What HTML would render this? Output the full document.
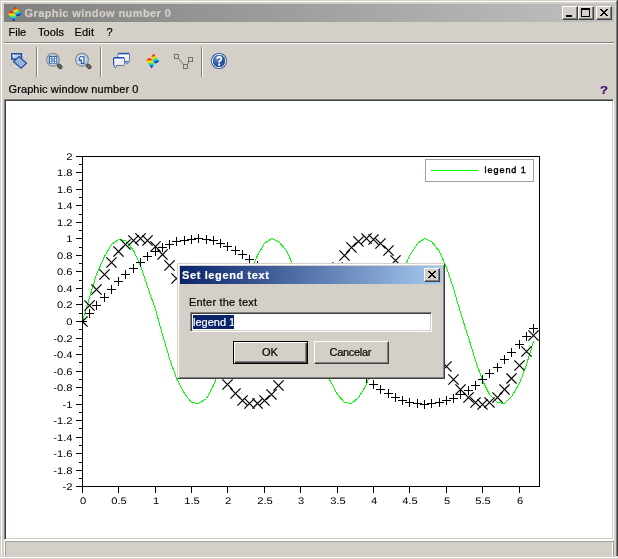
<!DOCTYPE html>
<html><head><meta charset="utf-8"><title>Graphic window number 0</title><style>
*{margin:0;padding:0;box-sizing:border-box}
body{will-change:transform}
html,body{width:618px;height:559px;overflow:hidden;background:#d4d0c8;font-family:"Liberation Sans",sans-serif;font-size:11px;color:#000}
.a{position:absolute}
.t{white-space:nowrap;line-height:1;-webkit-text-stroke:0.2px currentColor}
.cb{position:absolute;width:16px;height:14px;background:#d4d0c8;border-left:1px solid #fff;border-top:1px solid #fff;border-right:1px solid #404040;border-bottom:1px solid #404040;box-shadow:inset -1px -1px 0 #808080}
.btn{position:absolute;background:#d4d0c8;border-left:1px solid #fff;border-top:1px solid #fff;border-right:1px solid #404040;border-bottom:1px solid #404040;box-shadow:inset -1px -1px 0 #808080}
.sep{position:absolute;width:2px;height:30px;top:47px;border-left:1px solid #808080;border-right:1px solid #fff}
</style></head><body>
<!-- window frame -->
<div class="a" style="left:1px;top:1px;width:616px;height:1px;background:#fff"></div>
<div class="a" style="left:1px;top:1px;width:1px;height:555px;background:#fff"></div>
<div class="a" style="left:617px;top:0;width:1px;height:556px;background:#404040"></div>
<div class="a" style="left:616px;top:1px;width:1px;height:555px;background:#808080"></div>
<!-- title bar -->
<div class="a" style="left:4px;top:4px;width:610px;height:18px;background:linear-gradient(to right,#808080,#c0c0c0)"></div>
<svg class="a" style="left:6px;top:5.5px" width="16" height="16" viewBox="0 0 16 16">
<defs><linearGradient id="ti1" gradientUnits="userSpaceOnUse" x1="0" y1="5" x2="0" y2="15"><stop offset="0" stop-color="#b00000"/><stop offset="0.15" stop-color="#ff3000"/><stop offset="0.35" stop-color="#f8e800"/><stop offset="0.55" stop-color="#50e070"/><stop offset="0.72" stop-color="#00b0f0"/><stop offset="0.88" stop-color="#0030e0"/><stop offset="1" stop-color="#000090"/></linearGradient>
<linearGradient id="ti2" gradientUnits="userSpaceOnUse" x1="9" y1="1.2" x2="12" y2="10.5"><stop offset="0" stop-color="#b00000"/><stop offset="0.15" stop-color="#ff3000"/><stop offset="0.35" stop-color="#f8e800"/><stop offset="0.55" stop-color="#50e070"/><stop offset="0.72" stop-color="#00b0f0"/><stop offset="0.88" stop-color="#0030e0"/><stop offset="1" stop-color="#000090"/></linearGradient></defs>
<path d="M2 7.6 C3.2 5.6 5 4.6 6.6 5.6 C7.6 6.3 9.5 9 10.8 10.6 L8.3 14.6 Q7.8 15.3 7.2 14.8 Z" fill="url(#ti1)"/>
<path d="M7 5.4 C7.8 3.4 8.6 1.2 9.9 1.3 C11 1.5 13.5 6 15.1 8.4 L12 10.3 Q11.3 10.5 10.8 10 Z" fill="url(#ti2)"/>
</svg>
<div class="a t" style="left:24.5px;top:8px;font-weight:bold;font-size:11px;color:#d4d0c8;letter-spacing:0.4px">Graphic window number 0</div>
<div class="cb" style="left:562px;top:6px"><div class="a" style="left:3px;top:8px;width:6px;height:2px;background:#000"></div></div>
<div class="cb" style="left:578px;top:6px"><div class="a" style="left:2px;top:1px;width:9px;height:9px;border:1px solid #000;border-top-width:2px"></div></div>
<div class="cb" style="left:596px;top:6px"><svg class="a" style="left:3px;top:2px" width="8" height="7" shape-rendering="crispEdges"><path d="M0 0h2v1h-2zM6 0h2v1h-2zM1 1h2v1h-2zM5 1h2v1h-2zM2 2h4v1h-4zM3 3h2v1h-2zM2 4h4v1h-4zM1 5h2v1h-2zM5 5h2v1h-2zM0 6h2v1h-2zM6 6h2v1h-2z" fill="#000"/></svg></div>
<!-- menu -->
<div class="a t" style="left:8.5px;top:27px">File</div>
<div class="a t" style="left:38px;top:27px;letter-spacing:0.1px">Tools</div>
<div class="a t" style="left:74.5px;top:27px;letter-spacing:0.2px">Edit</div>
<div class="a t" style="left:106.5px;top:27px">?</div>
<div class="a" style="left:4px;top:42px;width:610px;height:1px;background:#808080"></div>
<div class="a" style="left:4px;top:43px;width:610px;height:1px;background:#fff"></div>
<!-- toolbar -->
<div class="sep" style="left:36px"></div>
<div class="sep" style="left:100px"></div>
<div class="sep" style="left:201px"></div>
<svg class="a" style="left:0;top:44px" width="240" height="34" viewBox="0 44 240 34">
<defs>
<linearGradient id="lb" x1="0" y1="0" x2="1" y2="1"><stop offset="0" stop-color="#e8f0fa"/><stop offset="1" stop-color="#8fb0e0"/></linearGradient>
<radialGradient id="lens" cx="0.4" cy="0.4" r="0.6"><stop offset="0" stop-color="#eef5fd"/><stop offset="1" stop-color="#a9c8ee"/></radialGradient>
<radialGradient id="hb" cx="0.35" cy="0.3" r="0.75"><stop offset="0" stop-color="#6a96d0"/><stop offset="0.6" stop-color="#2c5aa0"/><stop offset="1" stop-color="#1e4a90"/></radialGradient>
<linearGradient id="jet" x1="0" y1="0" x2="0" y2="1"><stop offset="0" stop-color="#c00000"/><stop offset="0.2" stop-color="#ff5000"/><stop offset="0.4" stop-color="#e8f000"/><stop offset="0.6" stop-color="#40e090"/><stop offset="0.8" stop-color="#0090ff"/><stop offset="1" stop-color="#0000a0"/></linearGradient>
</defs>
<!-- rotate -->
<path d="M22.5 55 Q25.3 55 25.5 57.5" fill="none" stroke="#a8aeb6" stroke-width="2.6"/>
<path d="M23.5 58 L25.5 60.2 L27.6 58 Z" fill="#fff" stroke="#a8aeb6" stroke-width="0.9"/>
<path d="M22.5 55 Q25.3 55 25.5 57.5" fill="none" stroke="#fff" stroke-width="1.2"/>
<path d="M17.5 67.2 Q13 67.2 12.8 65" fill="none" stroke="#a8aeb6" stroke-width="2.6"/>
<path d="M10.7 65 L12.8 62.8 L14.9 65 Z" fill="#fff" stroke="#a8aeb6" stroke-width="0.9"/>
<path d="M17.5 67.2 Q13 67.2 12.8 65" fill="none" stroke="#fff" stroke-width="1.2"/>
<rect x="11.8" y="53.8" width="9.6" height="5.4" fill="url(#lb)" stroke="#1e4c9c" stroke-width="1.5"/>
<rect x="12.6" y="54.6" width="1.2" height="1.2" fill="#fff"/>
<path d="M13.6 61.5 L19 56.6 L26.4 63.3 L21.1 68.2 Z" fill="#a8c0e8" stroke="#1e4c9c" stroke-width="1.3"/>
<path d="M15.2 61.5 L19 58.2 L24.7 63.3 L21.2 66.5 Z" fill="#98b2de"/>
<!-- zoom 1 -->
<circle cx="53" cy="59.8" r="6.4" fill="url(#lens)" stroke="#8c8c8c" stroke-width="1.2"/>
<ellipse cx="59.7" cy="66.4" rx="2.7" ry="1.9" transform="rotate(45 59.7 66.4)" fill="#6a6a6a" stroke="#383838" stroke-width="0.9"/>
<rect x="48.8" y="55.8" width="8.5" height="7.9" fill="#3465ad"/>
<g fill="#fff"><rect x="50" y="57" width="1.5" height="1.5"/><rect x="52.3" y="57" width="1.7" height="1.5"/><rect x="54.8" y="57" width="1.5" height="1.5"/>
<rect x="50" y="59.2" width="1.5" height="1.7"/><rect x="54.8" y="59.2" width="1.5" height="1.7"/><rect x="52.3" y="59.2" width="1.7" height="1.7" fill="#9fc0ea"/>
<rect x="50" y="61.6" width="1.5" height="1.5"/><rect x="52.3" y="61.6" width="1.7" height="1.5"/><rect x="54.8" y="61.6" width="1.5" height="1.5"/></g>
<!-- zoom 2 -->
<circle cx="82" cy="59.8" r="6.4" fill="url(#lens)" stroke="#8c8c8c" stroke-width="1.2"/>
<ellipse cx="88.7" cy="66.4" rx="2.7" ry="1.9" transform="rotate(45 88.7 66.4)" fill="#6a6a6a" stroke="#383838" stroke-width="0.9"/>
<path d="M80.6 56.7 L83.9 56.7 L83.9 63.5 L81.4 63.5 L81.4 59.9 L79.2 60.4 L79.2 58.2 Z" fill="#fff" stroke="#2050a0" stroke-width="1.1" stroke-linejoin="round"/>
<!-- bubbles -->
<linearGradient id="bub" x1="0" y1="0" x2="0" y2="1"><stop offset="0" stop-color="#ffffff"/><stop offset="1" stop-color="#e4e6ec"/></linearGradient>
<rect x="117.8" y="53.4" width="11.7" height="8.3" rx="1" fill="url(#bub)" stroke="#5a78b4" stroke-width="1"/>
<path d="M118.2 53.6 H129.2" stroke="#2050a8" stroke-width="1.5"/>
<path d="M124.8 61.6 L128.3 61.6 L127.6 64 Z" fill="#fff" stroke="#3a60a8" stroke-width="0.9"/>
<rect x="113.5" y="57.6" width="11" height="7.9" rx="1" fill="url(#bub)" stroke="#5a78b4" stroke-width="1"/>
<path d="M113.9 57.8 H124.1" stroke="#2050a8" stroke-width="1.5"/>
<path d="M113.6 57.9 V64.8" stroke="#2050a8" stroke-width="1.2"/>
<path d="M114.2 65.4 L117.6 65.4 L115.2 68 Z" fill="#fff" stroke="#3a60a8" stroke-width="0.9"/>
<path d="M114.5 64.9 H117.3" stroke="#fff" stroke-width="1"/>
<!-- scilab -->
</svg>
<svg class="a" style="left:144px;top:53px" width="16" height="16" viewBox="0 0 16 16">
<defs><linearGradient id="tb1" gradientUnits="userSpaceOnUse" x1="0" y1="5" x2="0" y2="15"><stop offset="0" stop-color="#b00000"/><stop offset="0.15" stop-color="#ff3000"/><stop offset="0.35" stop-color="#f8e800"/><stop offset="0.55" stop-color="#50e070"/><stop offset="0.72" stop-color="#00b0f0"/><stop offset="0.88" stop-color="#0030e0"/><stop offset="1" stop-color="#000090"/></linearGradient>
<linearGradient id="tb2" gradientUnits="userSpaceOnUse" x1="9" y1="1.2" x2="12" y2="10.5"><stop offset="0" stop-color="#b00000"/><stop offset="0.15" stop-color="#ff3000"/><stop offset="0.35" stop-color="#f8e800"/><stop offset="0.55" stop-color="#50e070"/><stop offset="0.72" stop-color="#00b0f0"/><stop offset="0.88" stop-color="#0030e0"/><stop offset="1" stop-color="#000090"/></linearGradient></defs>
<path d="M2 7.6 C3.2 5.6 5 4.6 6.6 5.6 C7.6 6.3 9.5 9 10.8 10.6 L8.3 14.6 Q7.8 15.3 7.2 14.8 Z" fill="url(#tb1)"/>
<path d="M7 5.4 C7.8 3.4 8.6 1.2 9.9 1.3 C11 1.5 13.5 6 15.1 8.4 L12 10.3 Q11.3 10.5 10.8 10 Z" fill="url(#tb2)"/>
</svg>
<svg class="a" style="left:0;top:44px" width="240" height="34" viewBox="0 44 240 34">
<!-- datatip -->
<g fill="none" stroke="#707070" stroke-width="1">
<rect x="174.5" y="54.5" width="4" height="4"/><rect x="183.5" y="64.5" width="4" height="4"/><rect x="188.5" y="57.5" width="4" height="4"/>
<path d="M178.5 58.5 L183.5 64.5 M187.5 64.5 L189 61.5"/>
</g>
<!-- help -->
<circle cx="219" cy="61" r="8" fill="#2a56a0"/>
<circle cx="219" cy="61" r="6.6" fill="none" stroke="#fff" stroke-width="1"/>
<circle cx="219" cy="61" r="6" fill="url(#hb)"/>
<path d="M217.1 58.9 Q217.2 56.8 219.3 56.8 Q221.4 56.9 221.4 58.7 Q221.4 59.9 220 60.7 Q219.2 61.2 219.2 62.5" fill="none" stroke="#fff" stroke-width="1.8"/>
<rect x="218.1" y="63.5" width="2.1" height="2.1" fill="#fff"/>
</svg>
<!-- status label -->
<div class="a t" style="left:8.5px;top:84px;letter-spacing:0.1px">Graphic window number 0</div>
<div class="a t" style="left:600.3px;top:85.5px;font-weight:bold;color:#400080;font-size:10px;transform:scaleX(1.3);transform-origin:left">?</div>
<!-- canvas -->
<div class="a" style="left:4px;top:99px;width:610px;height:441px;background:#fff;border-left:1px solid #808080;border-top:1px solid #808080;border-right:1px solid #fff;border-bottom:1px solid #fff;box-shadow:inset 1px 1px 0 #404040,inset -1px -1px 0 #d4d0c8"></div>
<svg class="a" style="left:0;top:0" width="618" height="559" viewBox="0 0 618 559" shape-rendering="crispEdges">
<defs>
<path id="mp" d="M-4 0h9v1h-9zM0 -4h1v9h-1z" fill="#000"/>
<path id="mx" d="M-4.6 -4.6L5.6 5.6M-4.6 5.6L5.6 -4.6" stroke="#000" stroke-width="1.25" shape-rendering="auto"/>
<clipPath id="ax"><rect x="82" y="156" width="458" height="331"/></clipPath>
</defs>
<g fill="#000">
<rect x="82" y="156" width="458" height="1"/>
<rect x="82" y="486" width="458" height="1"/>
<rect x="82" y="156" width="1" height="331"/>
<rect x="539" y="156" width="1" height="331"/>
<rect x="76" y="156" width="6" height="1"/>
<rect x="79" y="164" width="3" height="1"/>
<rect x="76" y="172" width="6" height="1"/>
<rect x="79" y="180" width="3" height="1"/>
<rect x="76" y="189" width="6" height="1"/>
<rect x="79" y="197" width="3" height="1"/>
<rect x="76" y="205" width="6" height="1"/>
<rect x="79" y="214" width="3" height="1"/>
<rect x="76" y="222" width="6" height="1"/>
<rect x="79" y="230" width="3" height="1"/>
<rect x="76" y="238" width="6" height="1"/>
<rect x="79" y="247" width="3" height="1"/>
<rect x="76" y="255" width="6" height="1"/>
<rect x="79" y="263" width="3" height="1"/>
<rect x="76" y="271" width="6" height="1"/>
<rect x="79" y="280" width="3" height="1"/>
<rect x="76" y="288" width="6" height="1"/>
<rect x="79" y="296" width="3" height="1"/>
<rect x="76" y="304" width="6" height="1"/>
<rect x="79" y="313" width="3" height="1"/>
<rect x="76" y="321" width="6" height="1"/>
<rect x="79" y="329" width="3" height="1"/>
<rect x="76" y="338" width="6" height="1"/>
<rect x="79" y="346" width="3" height="1"/>
<rect x="76" y="354" width="6" height="1"/>
<rect x="79" y="362" width="3" height="1"/>
<rect x="76" y="371" width="6" height="1"/>
<rect x="79" y="379" width="3" height="1"/>
<rect x="76" y="387" width="6" height="1"/>
<rect x="79" y="395" width="3" height="1"/>
<rect x="76" y="404" width="6" height="1"/>
<rect x="79" y="412" width="3" height="1"/>
<rect x="76" y="420" width="6" height="1"/>
<rect x="79" y="428" width="3" height="1"/>
<rect x="76" y="437" width="6" height="1"/>
<rect x="79" y="445" width="3" height="1"/>
<rect x="76" y="453" width="6" height="1"/>
<rect x="79" y="462" width="3" height="1"/>
<rect x="76" y="470" width="6" height="1"/>
<rect x="79" y="478" width="3" height="1"/>
<rect x="76" y="486" width="6" height="1"/>
<rect x="82" y="487" width="1" height="6"/>
<rect x="118" y="487" width="1" height="6"/>
<rect x="155" y="487" width="1" height="6"/>
<rect x="191" y="487" width="1" height="6"/>
<rect x="227" y="487" width="1" height="6"/>
<rect x="264" y="487" width="1" height="6"/>
<rect x="300" y="487" width="1" height="6"/>
<rect x="337" y="487" width="1" height="6"/>
<rect x="373" y="487" width="1" height="6"/>
<rect x="409" y="487" width="1" height="6"/>
<rect x="446" y="487" width="1" height="6"/>
<rect x="482" y="487" width="1" height="6"/>
<rect x="519" y="487" width="1" height="6"/>
</g>
<g font-family='"Liberation Sans", sans-serif' font-size="10" fill="#000" shape-rendering="auto" text-rendering="geometricPrecision">
<text transform="translate(72.50 160) scale(1.12 0.95)" text-anchor="end">2</text>
<text transform="translate(72.50 176) scale(1.12 0.95)" text-anchor="end">1.8</text>
<text transform="translate(72.50 193) scale(1.12 0.95)" text-anchor="end">1.6</text>
<text transform="translate(72.50 209) scale(1.12 0.95)" text-anchor="end">1.4</text>
<text transform="translate(72.50 226) scale(1.12 0.95)" text-anchor="end">1.2</text>
<text transform="translate(72.50 242) scale(1.12 0.95)" text-anchor="end">1</text>
<text transform="translate(72.50 259) scale(1.12 0.95)" text-anchor="end">0.8</text>
<text transform="translate(72.50 275) scale(1.12 0.95)" text-anchor="end">0.6</text>
<text transform="translate(72.50 292) scale(1.12 0.95)" text-anchor="end">0.4</text>
<text transform="translate(72.50 308) scale(1.12 0.95)" text-anchor="end">0.2</text>
<text transform="translate(72.50 325) scale(1.12 0.95)" text-anchor="end">0</text>
<text transform="translate(72.50 342) scale(1.12 0.95)" text-anchor="end">-0.2</text>
<text transform="translate(72.50 358) scale(1.12 0.95)" text-anchor="end">-0.4</text>
<text transform="translate(72.50 375) scale(1.12 0.95)" text-anchor="end">-0.6</text>
<text transform="translate(72.50 391) scale(1.12 0.95)" text-anchor="end">-0.8</text>
<text transform="translate(72.50 408) scale(1.12 0.95)" text-anchor="end">-1</text>
<text transform="translate(72.50 424) scale(1.12 0.95)" text-anchor="end">-1.2</text>
<text transform="translate(72.50 441) scale(1.12 0.95)" text-anchor="end">-1.4</text>
<text transform="translate(72.50 457) scale(1.12 0.95)" text-anchor="end">-1.6</text>
<text transform="translate(72.50 474) scale(1.12 0.95)" text-anchor="end">-1.8</text>
<text transform="translate(72.50 490) scale(1.12 0.95)" text-anchor="end">-2</text>
<text transform="translate(83.00 504) scale(1.12 0.95)" text-anchor="middle">0</text>
<text transform="translate(119.00 504) scale(1.12 0.95)" text-anchor="middle">0.5</text>
<text transform="translate(156.00 504) scale(1.12 0.95)" text-anchor="middle">1</text>
<text transform="translate(192.00 504) scale(1.12 0.95)" text-anchor="middle">1.5</text>
<text transform="translate(228.00 504) scale(1.12 0.95)" text-anchor="middle">2</text>
<text transform="translate(265.00 504) scale(1.12 0.95)" text-anchor="middle">2.5</text>
<text transform="translate(301.00 504) scale(1.12 0.95)" text-anchor="middle">3</text>
<text transform="translate(338.00 504) scale(1.12 0.95)" text-anchor="middle">3.5</text>
<text transform="translate(374.00 504) scale(1.12 0.95)" text-anchor="middle">4</text>
<text transform="translate(410.00 504) scale(1.12 0.95)" text-anchor="middle">4.5</text>
<text transform="translate(447.00 504) scale(1.12 0.95)" text-anchor="middle">5</text>
<text transform="translate(483.00 504) scale(1.12 0.95)" text-anchor="middle">5.5</text>
<text transform="translate(520.00 504) scale(1.12 0.95)" text-anchor="middle">6</text>
</g>
<g clip-path="url(#ax)">
<polyline points="82.5,321.5 89.5,297.5 96.5,274.5 104.5,256.5 111.5,244.5 118.5,239.5 125.5,240.5 133.5,250.5 140.5,265.5 147.5,286.5 155.5,309.5 162.5,334.5 169.5,358.5 176.5,378.5 184.5,393.5 191.5,402.5 198.5,403.5 206.5,398.5 213.5,385.5 220.5,367.5 227.5,344.5 235.5,320.5 242.5,295.5 249.5,273.5 257.5,255.5 264.5,243.5 271.5,238.5 278.5,241.5 286.5,250.5 293.5,266.5 300.5,287.5 307.5,311.5 315.5,335.5 322.5,359.5 329.5,379.5 337.5,394.5 344.5,402.5 351.5,403.5 358.5,397.5 366.5,384.5 373.5,365.5 380.5,343.5 388.5,318.5 395.5,294.5 402.5,272.5 409.5,255.5 417.5,243.5 424.5,238.5 431.5,241.5 439.5,251.5 446.5,267.5 453.5,288.5 460.5,312.5 468.5,337.5 475.5,360.5 482.5,380.5 489.5,394.5 497.5,402.5 504.5,403.5 511.5,396.5 519.5,383.5 526.5,364.5 533.5,341.5" fill="none" stroke="#00ff00" stroke-width="1"/>
<path d="M78 321h9v1h-9zM82 317h1v9h-1zM85 313h9v1h-9zM89 309h1v9h-1zM92 305h9v1h-9zM96 301h1v9h-1zM100 297h9v1h-9zM104 293h1v9h-1zM107 289h9v1h-9zM111 285h1v9h-1zM114 281h9v1h-9zM118 277h1v9h-1zM121 274h9v1h-9zM125 270h1v9h-1zM129 268h9v1h-9zM133 264h1v9h-1zM136 262h9v1h-9zM140 258h1v9h-1zM143 256h9v1h-9zM147 252h1v9h-1zM151 251h9v1h-9zM155 247h1v9h-1zM158 247h9v1h-9zM162 243h1v9h-1zM165 244h9v1h-9zM169 240h1v9h-1zM172 241h9v1h-9zM176 237h1v9h-1zM180 240h9v1h-9zM184 236h1v9h-1zM187 239h9v1h-9zM191 235h1v9h-1zM194 238h9v1h-9zM198 234h1v9h-1zM202 239h9v1h-9zM206 235h1v9h-1zM209 240h9v1h-9zM213 236h1v9h-1zM216 243h9v1h-9zM220 239h1v9h-1zM223 246h9v1h-9zM227 242h1v9h-1zM231 250h9v1h-9zM235 246h1v9h-1zM238 254h9v1h-9zM242 250h1v9h-1zM245 259h9v1h-9zM249 255h1v9h-1zM253 265h9v1h-9zM257 261h1v9h-1zM260 272h9v1h-9zM264 268h1v9h-1zM267 278h9v1h-9zM271 274h1v9h-1zM274 286h9v1h-9zM278 282h1v9h-1zM282 293h9v1h-9zM286 289h1v9h-1zM289 301h9v1h-9zM293 297h1v9h-1zM296 309h9v1h-9zM300 305h1v9h-1zM303 318h9v1h-9zM307 314h1v9h-1zM311 326h9v1h-9zM315 322h1v9h-1zM318 334h9v1h-9zM322 330h1v9h-1zM325 342h9v1h-9zM329 338h1v9h-1zM333 350h9v1h-9zM337 346h1v9h-1zM340 358h9v1h-9zM344 354h1v9h-1zM347 365h9v1h-9zM351 361h1v9h-1zM354 372h9v1h-9zM358 368h1v9h-1zM362 378h9v1h-9zM366 374h1v9h-1zM369 384h9v1h-9zM373 380h1v9h-1zM376 389h9v1h-9zM380 385h1v9h-1zM384 393h9v1h-9zM388 389h1v9h-1zM391 397h9v1h-9zM395 393h1v9h-1zM398 400h9v1h-9zM402 396h1v9h-1zM405 402h9v1h-9zM409 398h1v9h-1zM413 403h9v1h-9zM417 399h1v9h-1zM420 404h9v1h-9zM424 400h1v9h-1zM427 403h9v1h-9zM431 399h1v9h-1zM435 402h9v1h-9zM439 398h1v9h-1zM442 400h9v1h-9zM446 396h1v9h-1zM449 398h9v1h-9zM453 394h1v9h-1zM456 394h9v1h-9zM460 390h1v9h-1zM464 390h9v1h-9zM468 386h1v9h-1zM471 385h9v1h-9zM475 381h1v9h-1zM478 379h9v1h-9zM482 375h1v9h-1zM485 373h9v1h-9zM489 369h1v9h-1zM493 367h9v1h-9zM497 363h1v9h-1zM500 359h9v1h-9zM504 355h1v9h-1zM507 352h9v1h-9zM511 348h1v9h-1zM515 344h9v1h-9zM519 340h1v9h-1zM522 336h9v1h-9zM526 332h1v9h-1zM529 328h9v1h-9zM533 324h1v9h-1z" fill="#000"/>
<g stroke="#000" stroke-width="1.25" fill="none" shape-rendering="auto">
<path d="M77.4 316.4L87.6 326.6M77.4 326.6L87.6 316.4"/>
<path d="M84.4 300.4L94.6 310.6M84.4 310.6L94.6 300.4"/>
<path d="M91.4 284.4L101.6 294.6M91.4 294.6L101.6 284.4"/>
<path d="M99.4 269.4L109.6 279.6M99.4 279.6L109.6 269.4"/>
<path d="M106.4 257.4L116.6 267.6M106.4 267.6L116.6 257.4"/>
<path d="M113.4 246.4L123.6 256.6M113.4 256.6L123.6 246.4"/>
<path d="M120.4 239.4L130.6 249.6M120.4 249.6L130.6 239.4"/>
<path d="M128.4 235.4L138.6 245.6M128.4 245.6L138.6 235.4"/>
<path d="M135.4 233.4L145.6 243.6M135.4 243.6L145.6 233.4"/>
<path d="M142.4 235.4L152.6 245.6M142.4 245.6L152.6 235.4"/>
<path d="M150.4 241.4L160.6 251.6M150.4 251.6L160.6 241.4"/>
<path d="M157.4 249.4L167.6 259.6M157.4 259.6L167.6 249.4"/>
<path d="M164.4 260.4L174.6 270.6M164.4 270.6L174.6 260.4"/>
<path d="M171.4 273.4L181.6 283.6M171.4 283.6L181.6 273.4"/>
<path d="M179.4 288.4L189.6 298.6M179.4 298.6L189.6 288.4"/>
<path d="M186.4 304.4L196.6 314.6M186.4 314.6L196.6 304.4"/>
<path d="M193.4 321.4L203.6 331.6M193.4 331.6L203.6 321.4"/>
<path d="M201.4 337.4L211.6 347.6M201.4 347.6L211.6 337.4"/>
<path d="M208.4 353.4L218.6 363.6M208.4 363.6L218.6 353.4"/>
<path d="M215.4 367.4L225.6 377.6M215.4 377.6L225.6 367.4"/>
<path d="M222.4 379.4L232.6 389.6M222.4 389.6L232.6 379.4"/>
<path d="M230.4 388.4L240.6 398.6M230.4 398.6L240.6 388.4"/>
<path d="M237.4 395.4L247.6 405.6M237.4 405.6L247.6 395.4"/>
<path d="M244.4 398.4L254.6 408.6M244.4 408.6L254.6 398.4"/>
<path d="M252.4 398.4L262.6 408.6M252.4 408.6L262.6 398.4"/>
<path d="M259.4 395.4L269.6 405.6M259.4 405.6L269.6 395.4"/>
<path d="M266.4 389.4L276.6 399.6M266.4 399.6L276.6 389.4"/>
<path d="M273.4 380.4L283.6 390.6M273.4 390.6L283.6 380.4"/>
<path d="M281.4 368.4L291.6 378.6M281.4 378.6L291.6 368.4"/>
<path d="M288.4 354.4L298.6 364.6M288.4 364.6L298.6 354.4"/>
<path d="M295.4 339.4L305.6 349.6M295.4 349.6L305.6 339.4"/>
<path d="M302.4 323.4L312.6 333.6M302.4 333.6L312.6 323.4"/>
<path d="M310.4 306.4L320.6 316.6M310.4 316.6L320.6 306.4"/>
<path d="M317.4 290.4L327.6 300.6M317.4 300.6L327.6 290.4"/>
<path d="M324.4 275.4L334.6 285.6M324.4 285.6L334.6 275.4"/>
<path d="M332.4 262.4L342.6 272.6M332.4 272.6L342.6 262.4"/>
<path d="M339.4 250.4L349.6 260.6M339.4 260.6L349.6 250.4"/>
<path d="M346.4 242.4L356.6 252.6M346.4 252.6L356.6 242.4"/>
<path d="M353.4 236.4L363.6 246.6M353.4 246.6L363.6 236.4"/>
<path d="M361.4 233.4L371.6 243.6M361.4 243.6L371.6 233.4"/>
<path d="M368.4 234.4L378.6 244.6M368.4 244.6L378.6 234.4"/>
<path d="M375.4 238.4L385.6 248.6M375.4 248.6L385.6 238.4"/>
<path d="M383.4 245.4L393.6 255.6M383.4 255.6L393.6 245.4"/>
<path d="M390.4 255.4L400.6 265.6M390.4 265.6L400.6 255.4"/>
<path d="M397.4 268.4L407.6 278.6M397.4 278.6L407.6 268.4"/>
<path d="M404.4 282.4L414.6 292.6M404.4 292.6L414.6 282.4"/>
<path d="M412.4 298.4L422.6 308.6M412.4 308.6L422.6 298.4"/>
<path d="M419.4 314.4L429.6 324.6M419.4 324.6L429.6 314.4"/>
<path d="M426.4 330.4L436.6 340.6M426.4 340.6L436.6 330.4"/>
<path d="M434.4 346.4L444.6 356.6M434.4 356.6L444.6 346.4"/>
<path d="M441.4 361.4L451.6 371.6M441.4 371.6L451.6 361.4"/>
<path d="M448.4 374.4L458.6 384.6M448.4 384.6L458.6 374.4"/>
<path d="M455.4 384.4L465.6 394.6M455.4 394.6L465.6 384.4"/>
<path d="M463.4 392.4L473.6 402.6M463.4 402.6L473.6 392.4"/>
<path d="M470.4 397.4L480.6 407.6M470.4 407.6L480.6 397.4"/>
<path d="M477.4 399.4L487.6 409.6M477.4 409.6L487.6 399.4"/>
<path d="M484.4 397.4L494.6 407.6M484.4 407.6L494.6 397.4"/>
<path d="M492.4 392.4L502.6 402.6M492.4 402.6L502.6 392.4"/>
<path d="M499.4 384.4L509.6 394.6M499.4 394.6L509.6 384.4"/>
<path d="M506.4 373.4L516.6 383.6M506.4 383.6L516.6 373.4"/>
<path d="M514.4 360.4L524.6 370.6M514.4 370.6L524.6 360.4"/>
<path d="M521.4 346.4L531.6 356.6M521.4 356.6L531.6 346.4"/>
<path d="M528.4 330.4L538.6 340.6M528.4 340.6L538.6 330.4"/>
</g>
</g>
<rect x="425.5" y="159.5" width="108" height="22" fill="#fff" stroke="#a0a0a0"/>
<rect x="431" y="170" width="47" height="1" fill="#00ff00"/>
<text x="484.6" y="173" font-family='"Liberation Sans", sans-serif' font-size="9" letter-spacing="0.95" fill="#000" stroke="#000" stroke-width="0.4" shape-rendering="auto" text-rendering="geometricPrecision">legend 1</text>
</svg>
<!-- dialog -->
<div class="a" style="left:177px;top:263px;width:268px;height:116px;background:#d4d0c8;border-left:1px solid #d4d0c8;border-top:1px solid #d4d0c8;border-right:1px solid #404040;border-bottom:1px solid #404040;box-shadow:inset 1px 1px 0 #fff,inset -1px -1px 0 #808080"></div>
<div class="a" style="left:180px;top:266px;width:262px;height:18px;background:linear-gradient(to right,#0a246a,#a6caf0)"></div>
<div class="a t" style="left:182px;top:270px;font-weight:bold;font-size:11px;color:#fff;letter-spacing:0.62px">Set legend text</div>
<div class="cb" style="left:424px;top:268px"><svg class="a" style="left:3px;top:2px" width="8" height="7" shape-rendering="crispEdges"><path d="M0 0h2v1h-2zM6 0h2v1h-2zM1 1h2v1h-2zM5 1h2v1h-2zM2 2h4v1h-4zM3 3h2v1h-2zM2 4h4v1h-4zM1 5h2v1h-2zM5 5h2v1h-2zM0 6h2v1h-2zM6 6h2v1h-2z" fill="#000"/></svg></div>
<div class="a t" style="left:189px;top:297px;letter-spacing:0.2px">Enter the text</div>
<div class="a" style="left:190px;top:312px;width:242px;height:20px;background:#fff;border-left:1px solid #808080;border-top:1px solid #808080;border-right:1px solid #fff;border-bottom:1px solid #fff;box-shadow:inset 1px 1px 0 #404040,inset -1px -1px 0 #d4d0c8"></div>
<div class="a" style="left:193px;top:315px;width:41px;height:14px;background:#0a246a"></div>
<div class="a t" style="left:193px;top:317px;color:#fff">legend 1</div>
<div class="btn" style="left:233px;top:341px;width:75px;height:23px;border:1px solid #000;box-shadow:inset 1px 1px 0 #fff,inset -1px -1px 0 #404040,inset -2px -2px 0 #808080"></div>
<div class="a t" style="left:262px;top:347px">OK</div>
<div class="btn" style="left:314px;top:341px;width:75px;height:23px"></div>
<div class="a t" style="left:329.5px;top:347px;letter-spacing:-0.3px">Cancelar</div>
<!-- bottom bar -->
<div class="a" style="left:4px;top:540px;width:610px;height:17px;border-left:1px solid #fff;border-top:1px solid #fff;border-right:1px solid #a0a0a0;box-shadow:inset 1px 1px 0 #a0a0a0,inset -1px 0 0 #fff"></div>
<div class="a" style="left:0;top:557px;width:618px;height:1px;background:#fff"></div>
</body></html>
